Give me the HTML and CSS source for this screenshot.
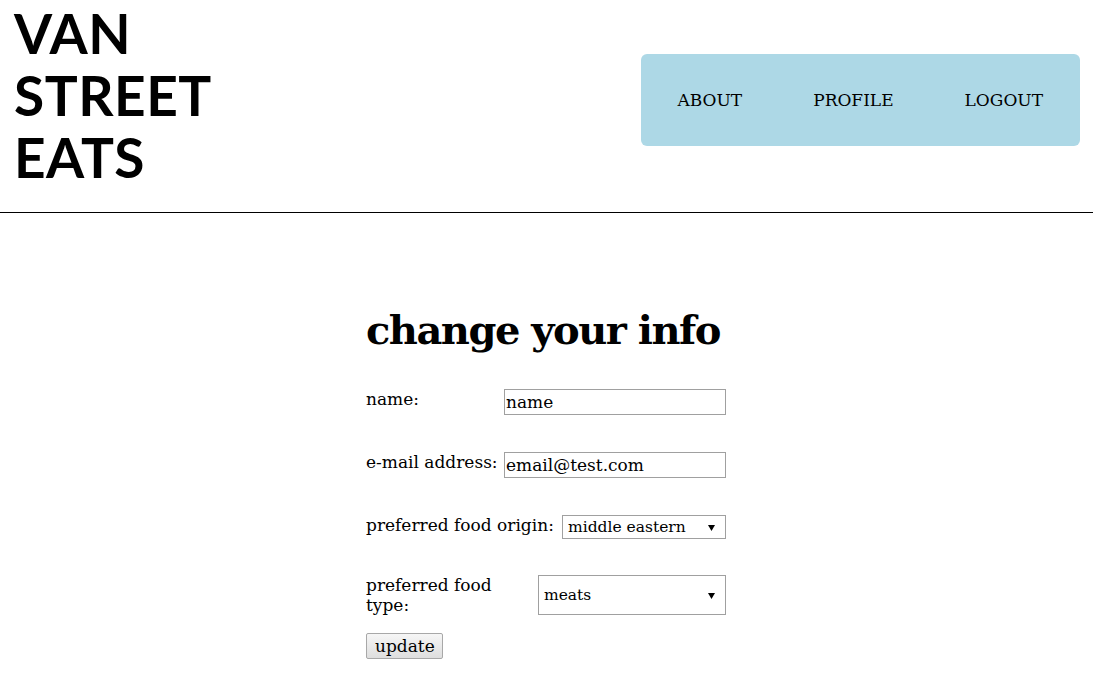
FILE: index.html
```html
<!DOCTYPE html>
<html lang="en">
<head>
<meta charset="utf-8">
<title>Van Street Eats - change your info</title>
<link rel="stylesheet" href="styles.css">
</head>
<body>
<header class="site-header">
  <div class="logo">VAN<br>STREET<br>EATS</div>
  <nav class="nav">
    <a class="nav-link" href="#">ABOUT</a>
    <a class="nav-link" href="#">PROFILE</a>
    <a class="nav-link" href="#">LOGOUT</a>
  </nav>
</header>
<main class="main">
  <form class="info-form">
    <h1 class="title">change your info</h1>
    <div class="row row-name">
      <label class="label" for="name">name:</label>
      <input class="text-input" id="name" type="text" value="name">
    </div>
    <div class="row row-email">
      <label class="label" for="email">e-mail address:</label>
      <input class="text-input" id="email" type="text" value="email@test.com">
    </div>
    <div class="row row-origin">
      <label class="label" for="origin">preferred food origin:</label>
      <select class="select select-origin" id="origin">
        <option>middle eastern</option>
      </select>
    </div>
    <div class="row row-type">
      <label class="label label-type" for="type">preferred food type:</label>
      <select class="select select-type" id="type">
        <option>meats</option>
      </select>
    </div>
    <button class="button" type="button">update</button>
  </form>
</main>
</body>
</html>
```
FILE: styles.css
```css
html, body {
  margin: 0;
  padding: 0;
  background: #ffffff;
  color: #000000;
}
body {
  font-family: "DejaVu Serif", "Liberation Serif", serif;
  font-size: 17px;
}
.site-header {
  display: flex;
  justify-content: space-between;
  align-items: flex-start;
  height: 212px;
  padding: 0 13px 0 14px;
  border-bottom: 1px solid #000000;
}
.logo {
  padding-top: 2px;
  font-family: "Lato", "DejaVu Sans", sans-serif;
  font-weight: 700;
  font-size: 55px;
  line-height: 62px;
  letter-spacing: 0.5px;
}
.nav {
  display: flex;
  align-items: center;
  height: 92px;
  margin-top: 54px;
  padding: 0 1px;
  background: #add8e6;
  border-radius: 6px;
}
.nav-link {
  padding: 0 36px 0 35px;
  color: #000000;
  text-decoration: none;
  font-size: 17px;
  line-height: 20px;
}
.main {
  display: flex;
  justify-content: center;
  padding-top: 95px;
  padding-right: 1px;
}
.info-form {
  width: 360px;
  display: flex;
  flex-direction: column;
  align-items: stretch;
}
.title {
  margin: 0 0 37px 0;
  font-size: 40px;
  line-height: 44px;
  letter-spacing: -1.5px;
  font-weight: 700;
  white-space: nowrap;
}
.row {
  display: flex;
  justify-content: space-between;
  align-items: stretch;
  margin-bottom: 37px;
}
.row-origin {
  margin-bottom: 36px;
}
.row-type {
  margin-bottom: 18px;
}
.label {
  line-height: 20px;
  min-width: 0;
}
.text-input {
  flex-shrink: 0;
  width: 222px;
  height: 26px;
  box-sizing: border-box;
  margin: 0;
  padding: 1px 1px;
  border: 1px solid #a0a0a0;
  border-radius: 0;
  font-family: inherit;
  font-size: 17px;
  color: #000000;
  background: #ffffff;
  outline: none;
}
.select {
  flex-shrink: 0;
  -webkit-appearance: none;
  appearance: none;
  box-sizing: border-box;
  margin: 0;
  padding: 0 20px 0 5px;
  border: 1px solid #a0a0a0;
  border-radius: 0;
  font-family: inherit;
  font-size: 15.5px;
  color: #000000;
  background-color: #ffffff;
  background-image: url("data:image/svg+xml;utf8,<svg xmlns='http://www.w3.org/2000/svg' width='8' height='8' viewBox='0 0 8 8'><path d='M0 1 L8 1 L4 8 Z' fill='black'/></svg>");
  background-repeat: no-repeat;
  background-position: right 10px center;
  background-size: 7px 7px;
}
.select-origin {
  width: 164px;
  height: 24px;
}
.select-type {
  width: 188px;
}
.button {
  align-self: flex-start;
  width: 77px;
  height: 26px;
  margin: 0;
  padding: 0 8px;
  font-family: inherit;
  font-size: 17px;
  color: #000000;
  background: linear-gradient(#f6f6f6, #dedede);
  border: 1px solid #a8a8a8;
  border-radius: 2px;
}
```
